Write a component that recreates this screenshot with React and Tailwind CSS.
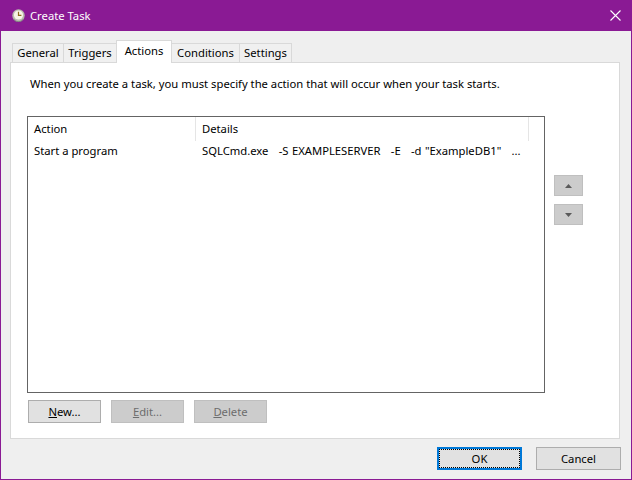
const tabs = [
  { name: 'General', width: 'w-[51px] border-r-0' },
  { name: 'Triggers', width: 'w-[53px] border-r-0' },
  { name: 'Actions', width: 'w-[56px]' },
  { name: 'Conditions', width: 'w-[67px] border-l-0 border-r-0' },
  { name: 'Settings', width: 'w-[53px]' },
];

function ClockIcon() {
  return (
    <svg width="13" height="13" viewBox="0 0 13 13">
      <circle cx="6.5" cy="6.5" r="6.2" fill="#b9bbae" />
      <circle cx="6.5" cy="6" r="4.6" fill="#f7f4e6" />
      <path d="M6.5 2.8V6.4H9.4" fill="none" stroke="#8c6a1c" strokeWidth="1.2" />
      <path d="M1.5 10A6 6 0 0 0 11.5 10" fill="none" stroke="#7f8480" strokeWidth="1" />
    </svg>
  );
}

function ActionButton({ hotkey, rest, disabled }) {
  return (
    <button className={`h-[23px] w-[73px] border text-center ${disabled ? 'border-[#bfbfbf] bg-[#cccccc] text-[#6d6d6d]' : 'border-[#adadad] bg-[#e1e1e1] text-black'}`}>
      <span className="underline">{hotkey}</span>{rest}
    </button>
  );
}

function ArrowButton({ up }) {
  return (
    <button className="flex h-[21px] w-[29px] items-center justify-center border border-[#bfbfbf] bg-[#cccccc]">
      <svg width="7" height="4" viewBox="0 0 7 4">
        <path d={up ? 'M3.5 0L7 4H0Z' : 'M0 0H7L3.5 4Z'} fill="#5a5a5a" />
      </svg>
    </button>
  );
}

export default function App() {
  return (
    <div className="flex h-[480px] w-[632px] flex-col border border-t-0 border-[#8a1a94] bg-[#efefef] font-['Noto_Sans',sans-serif] text-[11.25px] leading-[16px] text-black">
      <div className="flex h-[31px] shrink-0 items-center justify-between bg-[#8a1a94] pl-[11px] pr-[10px] text-white">
        <div className="flex items-center gap-[5px]">
          <ClockIcon />
          <span>Create Task</span>
        </div>
        <svg width="11" height="11" viewBox="0 0 11 11">
          <path d="M0.5 0.5L10.5 10.5M10.5 0.5L0.5 10.5" stroke="white" strokeWidth="1.1" />
        </svg>
      </div>

      <div className="flex flex-1 flex-col pl-[9px] pr-[11px] pt-[9px]">
        <div className="relative z-10 -mb-px flex h-[23px] items-end pl-[2px]">
          {tabs.map((t) => (
            <div
              key={t.name}
              className={t.name === 'Actions'
                ? `flex h-[23px] items-start justify-center border border-b-0 border-[#d9d9d9] bg-white pt-[2px] ${t.width}`
                : `flex h-[20px] items-center justify-center border border-[#d9d9d9] bg-[#f0f0f0] ${t.width}`}
            >
              {t.name}
            </div>
          ))}
        </div>

        <div className="flex h-[377px] flex-col border border-[#d9d9d9] bg-white pl-[16px] pt-[13px]">
          <p className="ml-[3px]">When you create a task, you must specify the action that will occur when your task starts.</p>

          <div className="mt-[24px] flex items-start gap-[9px]">
            <div className="h-[277px] w-[518px] shrink-0 border border-[#646464] bg-white">
              <div className="flex h-[24px] items-center">
                <div className="flex h-full w-[168px] items-center border-r border-[#e5e5e5] pl-[6px]">Action</div>
                <div className="flex h-full w-[333px] items-center border-r border-[#e5e5e5] pl-[6px]">Details</div>
              </div>
              <div className="mt-[2px] flex h-[16px] items-center whitespace-pre">
                <div className="w-[168px] pl-[6px]">Start a program</div>
                <div className="pl-[6px] [word-spacing:0.5px]">SQLCmd.exe   -S EXAMPLESERVER   -E   -d "ExampleDB1"   ...</div>
              </div>
            </div>
            <div className="mt-[59px] flex flex-col gap-[8px]">
              <ArrowButton up />
              <ArrowButton />
            </div>
          </div>

          <div className="ml-[1px] mt-[7px] flex gap-[10px]">
            <ActionButton hotkey="N" rest="ew..." />
            <ActionButton hotkey="E" rest="dit..." disabled />
            <ActionButton hotkey="D" rest="elete" disabled />
          </div>
        </div>

        <div className="-mr-px mt-[8px] flex justify-end gap-[14px]">
          <button className="h-[23px] w-[85px] border-2 border-[#0078d7] bg-[#e1e1e1]">
            <span className="flex h-full w-full items-center justify-center border border-dotted border-black">OK</span>
          </button>
          <button className="h-[23px] w-[85px] border border-[#adadad] bg-[#e1e1e1]">Cancel</button>
        </div>
      </div>
    </div>
  );
}
